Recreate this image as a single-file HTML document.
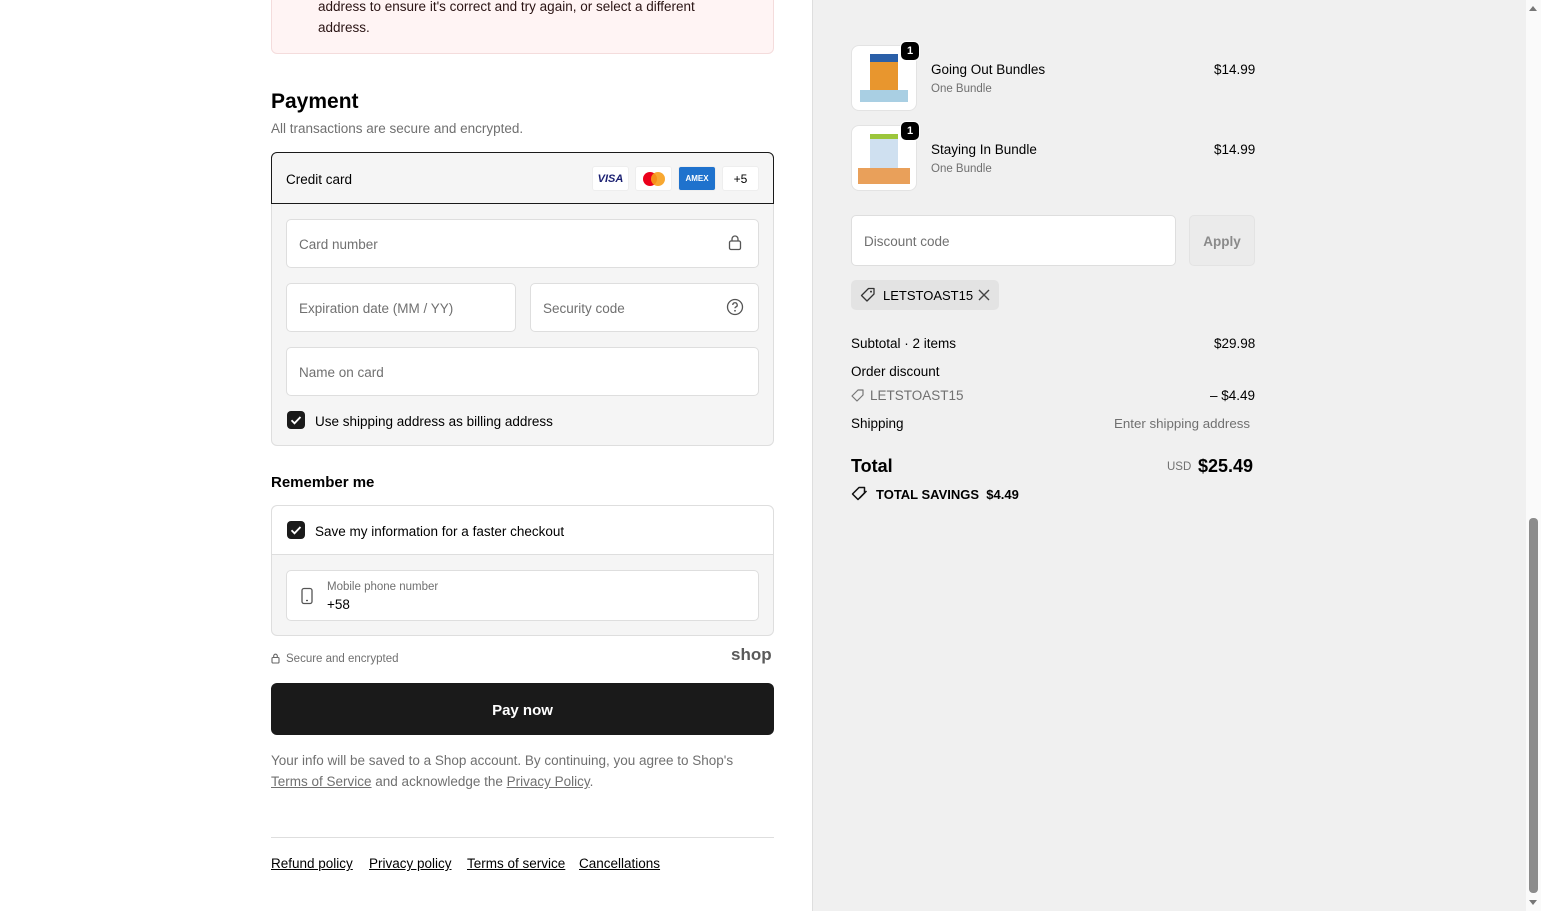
<!DOCTYPE html>
<html><head><meta charset="utf-8"><style>
*{box-sizing:border-box;margin:0;padding:0}
body{width:1541px;height:911px;overflow:hidden;background:#fff;font-family:"Liberation Sans",sans-serif;color:#000;font-size:13.5px;position:relative}
.a{position:absolute}
.right{position:absolute;left:812px;top:0;width:714px;height:911px;background:#f0f0f0;border-left:1px solid #dedede}
.sb{position:absolute;left:1526px;top:0;width:15px;height:911px;background:#fafafa}
.th{position:absolute;left:1529px;top:518px;width:9px;height:375px;background:#8c8c8c;border-radius:4px}
.inp{position:absolute;background:#fff;border:1px solid #dedede;border-radius:5px;color:#707070;font-size:13.5px;padding-left:12px;padding-top:2px;display:flex;align-items:center}
.gray{color:#707070}
.chk{position:absolute;width:18px;height:18px;background:#1a1a1a;border-radius:4px}
.u{text-decoration:underline}
.thumb{position:absolute;width:66px;height:66px;border-radius:8px;background:#fff;border:1px solid #e3e3e3;overflow:hidden}
.badge{position:absolute;width:20px;height:20px;background:#000;color:#fff;border-radius:6px;font-size:11px;font-weight:bold;display:flex;align-items:center;justify-content:center;border:1px solid #fff}
.card{position:absolute;height:25px;border-radius:3px;background:#fff;border:1px solid #eee;display:flex;align-items:center;justify-content:center;font-size:12px}
</style></head><body>
<div class="a" style="left:271px;top:-10px;width:503px;height:64px;background:#fff4f4;border:1px solid #f4dcdc;border-radius:6px"></div>
<div class="a" style="left:318px;top:-4px;font-size:13.5px;line-height:21px;color:#2a1414">address to ensure it's correct and try again, or select a different<br>address.</div>
<div class="a" style="left:271px;top:90px;font-size:21px;font-weight:bold">Payment</div>
<div class="a gray" style="left:271px;top:121px">All transactions are secure and encrypted.</div>
<div class="a" style="left:271px;top:152px;width:503px;height:294px;background:#f5f5f5;border:1px solid #dedede;border-radius:6px"></div>
<div class="a" style="left:271px;top:152px;width:503px;height:52px;background:#f5f5f5;border:1px solid #1a1a1a;border-radius:6px 6px 0 0"></div>
<div class="a" style="left:286px;top:172px">Credit card</div>
<div class="card" style="left:592px;top:166px;width:37px;color:#1a1f71;font-weight:bold;font-style:italic;font-size:11px">VISA</div>
<div class="card" style="left:635px;top:166px;width:37px"><svg width="24" height="16"><circle cx="8" cy="8" r="7" fill="#eb001b"/><circle cx="16" cy="8" r="7" fill="#f79e1b" opacity=".9"/></svg></div>
<div class="card" style="left:678px;top:166px;width:38px;background:#1f72cd;color:#fff;font-size:8px;font-weight:bold">AMEX</div>
<div class="card" style="left:722px;top:166px;width:37px">+5</div>
<div class="inp" style="left:286px;top:219px;width:473px;height:49px">Card number</div>
<svg class="a" style="left:728px;top:235px" width="14" height="16"><rect x="1.5" y="6" width="11" height="8.5" rx="1.5" fill="none" stroke="#555" stroke-width="1.3"/><path d="M4 6V4a3 3 0 0 1 6 0v2" fill="none" stroke="#555" stroke-width="1.3"/></svg>
<div class="inp" style="left:286px;top:283px;width:230px;height:49px">Expiration date (MM / YY)</div>
<div class="inp" style="left:530px;top:283px;width:229px;height:49px">Security code</div>
<svg class="a" style="left:726px;top:298px" width="18" height="18"><circle cx="9" cy="9" r="7.5" fill="none" stroke="#555" stroke-width="1.3"/><path d="M6.8 7a2.2 2.2 0 1 1 3 2c-.6.3-.8.7-.8 1.3" fill="none" stroke="#555" stroke-width="1.3"/><circle cx="9" cy="12.8" r=".9" fill="#555"/></svg>
<div class="inp" style="left:286px;top:347px;width:473px;height:49px">Name on card</div>
<div class="chk" style="left:287px;top:411px"><svg width="18" height="18"><path d="M4.5 9.3l3 3 6-6.3" fill="none" stroke="#fff" stroke-width="1.8"/></svg></div>
<div class="a" style="left:315px;top:414px">Use shipping address as billing address</div>
<div class="a" style="left:271px;top:474px;font-size:15px;font-weight:bold">Remember me</div>
<div class="a" style="left:271px;top:505px;width:503px;height:131px;background:#f5f5f5;border:1px solid #dedede;border-radius:6px"></div>
<div class="a" style="left:272px;top:506px;width:501px;height:49px;background:#fff;border-bottom:1px solid #dedede;border-radius:6px 6px 0 0"></div>
<div class="chk" style="left:287px;top:521px"><svg width="18" height="18"><path d="M4.5 9.3l3 3 6-6.3" fill="none" stroke="#fff" stroke-width="1.8"/></svg></div>
<div class="a" style="left:315px;top:524px">Save my information for a faster checkout</div>
<div class="a" style="left:286px;top:570px;width:473px;height:51px;background:#fff;border:1px solid #dedede;border-radius:5px"></div>
<svg class="a" style="left:300px;top:587px" width="14" height="18"><rect x="2" y="1.5" width="10" height="15" rx="2" fill="none" stroke="#555" stroke-width="1.3"/><path d="M6 13.5h2" stroke="#555" stroke-width="1.3"/></svg>
<div class="a gray" style="left:327px;top:581px;font-size:11.5px">Mobile phone number</div>
<div class="a" style="left:327px;top:597px">+58</div>
<svg class="a" style="left:271px;top:653px" width="10" height="11"><rect x="1" y="4.5" width="7" height="5.5" rx="1" fill="none" stroke="#666" stroke-width="1.1"/><path d="M2.7 4.5V3a1.8 1.8 0 0 1 3.6 0v1.5" fill="none" stroke="#666" stroke-width="1.1"/></svg>
<div class="a gray" style="left:286px;top:653px;font-size:11.5px">Secure and encrypted</div>
<div class="a" style="left:731px;top:645px;font-size:17px;font-weight:bold;color:#5a5a5a">shop</div>
<div class="a" style="left:271px;top:683px;width:503px;height:52px;background:#1a1a1a;border-radius:6px;color:#fff;font-weight:bold;font-size:15px;display:flex;align-items:center;justify-content:center;padding-top:2px">Pay now</div>
<div class="a gray" style="left:271px;top:750px;line-height:21px">Your info will be saved to a Shop account. By continuing, you agree to Shop's<br><span class="u">Terms of Service</span> and acknowledge the <span class="u">Privacy Policy</span>.</div>
<div class="a" style="left:271px;top:837px;width:503px;border-top:1px solid #dedede"></div>
<div class="a u" style="left:271px;top:856px">Refund policy</div>
<div class="a u" style="left:369px;top:856px">Privacy policy</div>
<div class="a u" style="left:467px;top:856px">Terms of service</div>
<div class="a u" style="left:579px;top:856px">Cancellations</div>

<div class="right"></div>
<div class="thumb" style="left:851px;top:45px"><div style="position:absolute;left:18px;top:8px;width:28px;height:36px;background:#e8962e;border-top:8px solid #2a5fa8"></div><div style="position:absolute;left:8px;top:44px;width:48px;height:12px;background:#a9cfe3"></div></div>
<div class="badge" style="left:900px;top:41px">1</div>
<div class="a" style="left:931px;top:62px">Going Out Bundles</div>
<div class="a gray" style="left:931px;top:83px;font-size:11.5px">One Bundle</div>
<div class="a" style="left:1214px;top:62px">$14.99</div>
<div class="thumb" style="left:851px;top:125px"><div style="position:absolute;left:18px;top:8px;width:28px;height:34px;background:#cfe0f0;border-top:5px solid #9cc63c"></div><div style="position:absolute;left:6px;top:42px;width:52px;height:16px;background:#e9a05a"></div></div>
<div class="badge" style="left:900px;top:121px">1</div>
<div class="a" style="left:931px;top:142px">Staying In Bundle</div>
<div class="a gray" style="left:931px;top:163px;font-size:11.5px">One Bundle</div>
<div class="a" style="left:1214px;top:142px">$14.99</div>
<div class="inp" style="left:851px;top:215px;width:325px;height:51px">Discount code</div>
<div class="a" style="left:1189px;top:215px;width:66px;height:51px;background:#ebebeb;border:1px solid #e3e3e3;border-radius:5px;color:#8a8a8a;font-weight:bold;display:flex;align-items:center;justify-content:center;padding-top:2px">Apply</div>
<div class="a" style="left:851px;top:280px;width:148px;height:30px;background:#e3e3e3;border-radius:5px"></div>
<svg class="a" style="left:860px;top:287px" width="16" height="16"><path d="M8.5 1.5h5.5v5.5l-7 7-5.5-5.5z" fill="none" stroke="#333" stroke-width="1.3" stroke-linejoin="round"/><circle cx="11" cy="4.6" r="1" fill="#333"/></svg>
<div class="a" style="left:883px;top:288px;font-size:13px">LETSTOAST15</div>
<svg class="a" style="left:978px;top:289px" width="12" height="12"><path d="M1 1l10 10M11 1L1 11" stroke="#444" stroke-width="1.4"/></svg>
<div class="a" style="left:851px;top:336px">Subtotal · 2 items</div>
<div class="a" style="left:1214px;top:336px">$29.98</div>
<div class="a" style="left:851px;top:364px">Order discount</div>
<svg class="a" style="left:851px;top:389px" width="13" height="13"><path d="M7 1h5v5l-6 6-5-5z" fill="none" stroke="#777" stroke-width="1.2" stroke-linejoin="round"/></svg>
<div class="a gray" style="left:870px;top:388px">LETSTOAST15</div>
<div class="a" style="left:1210px;top:388px">– $4.49</div>
<div class="a" style="left:851px;top:416px">Shipping</div>
<div class="a gray" style="left:1114px;top:416px;font-size:13.3px">Enter shipping address</div>
<div class="a" style="left:851px;top:456px;font-size:18px;font-weight:bold">Total</div>
<div class="a gray" style="left:1167px;top:461px;font-size:11.5px">USD</div>
<div class="a" style="left:1198px;top:456px;font-size:18px;font-weight:bold">$25.49</div>
<svg class="a" style="left:851px;top:486px" width="17" height="15"><path d="M8 1.5h5.5v5.5l-6.5 6.5-5.5-5.5z" fill="none" stroke="#111" stroke-width="1.5" stroke-linejoin="round"/><path d="M15.5 5l-6.8 7" stroke="#111" stroke-width="1.5"/></svg>
<div class="a" style="left:876px;top:487px;font-weight:bold;font-size:13px">TOTAL SAVINGS&nbsp; $4.49</div>
<div class="sb"></div><div class="th"></div>
<svg class="a" style="left:1528px;top:4px" width="10" height="8"><path d="M1 7L5 2l4 5z" fill="#777"/></svg>
<svg class="a" style="left:1528px;top:899px" width="10" height="8"><path d="M1 1l4 5 4-5z" fill="#777"/></svg>
</body></html>
